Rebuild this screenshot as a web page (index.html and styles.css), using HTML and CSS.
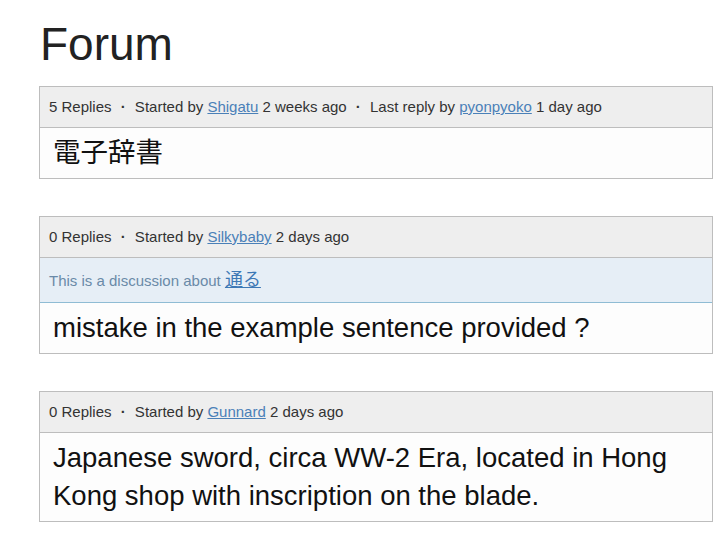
FILE: index.html
```html
<!DOCTYPE html>
<html>
  <head>
    <title>Forum</title>
    <link rel="stylesheet" href="styles.css">
  </head>
  <body>
    <div class="page">
      <h1 class="page-title">Forum</h1>

      <div class="thread">
        <div class="thread-meta">
          5 Replies <span class="dot">&middot;</span> Started by <a href="#">Shigatu</a> 2 weeks ago
          <span class="dot">&middot;</span> Last reply by <a href="#">pyonpyoko</a> 1 day ago
        </div>
        <div class="thread-title">電子辞書</div>
      </div>

      <div class="thread">
        <div class="thread-meta">
          0 Replies <span class="dot">&middot;</span> Started by <a href="#">Silkybaby</a> 2 days ago
        </div>
        <div class="thread-about">This is a discussion about <a href="#">通る</a></div>
        <div class="thread-title">mistake in the example sentence provided ?</div>
      </div>

      <div class="thread">
        <div class="thread-meta">
          0 Replies <span class="dot">&middot;</span> Started by <a href="#">Gunnard</a> 2 days ago
        </div>
        <div class="thread-title">Japanese sword, circa WW-2 Era, located in Hong Kong shop with inscription on the blade.</div>
      </div>
    </div>
  </body>
</html>
```

FILE: styles.css
```css
body {
  margin: 0;
  font-family: "Liberation Sans", Arial, "Noto Sans CJK JP", sans-serif;
  color: #222;
  background: #fff;
}
.page {
  padding: 14px 0 0 39px;
  width: 674px;
}
.page-title {
  font-size: 46px;
  font-weight: normal;
  margin: 0 0 12px 1px;
  line-height: 60px;
}
.thread {
  border: 1px solid #bdbdbd;
  margin-bottom: 37px;
  background: #fdfdfd;
}
.thread-meta {
  background: #eee;
  border-bottom: 1px solid #bdbdbd;
  font-size: 15px;
  line-height: 20px;
  padding: 10px 9px;
  color: #333;
}
.dot {
  margin: 0 5px;
  font-weight: bold;
}
.thread-meta a {
  color: #4a80b8;
}
.thread-about {
  background: #e6eef6;
  border-bottom: 1px solid #8fbcd4;
  color: #6a8aa8;
  font-size: 15px;
  line-height: 22px;
  padding: 11px 9px 10px;
}
.thread-about a {
  color: #3d78b5;
  font-size: 18px;
}
.thread-title {
  font-size: 27.5px;
  line-height: 38px;
  padding: 6px 13px;
  color: #111;
}
```
